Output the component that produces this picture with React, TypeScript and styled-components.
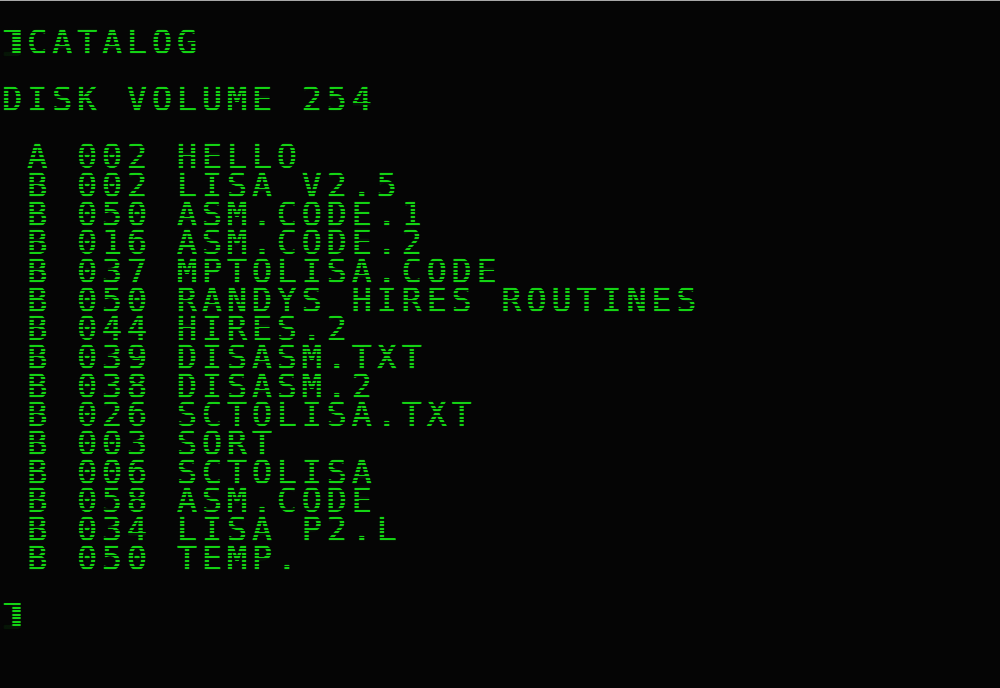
import React from "react";
import styled, { createGlobalStyle } from "styled-components";

const Global = createGlobalStyle`
  html, body { margin: 0; padding: 0; background: #050505; }
  body { width: 1000px; height: 688px; overflow: hidden; }
`;

const Screen = styled.div`
  position: relative;
  width: 1000px;
  height: 688px;
  box-sizing: border-box;
  border-top: 1px solid #a8a8a8;
  background: #050505;
  overflow: hidden;
`;

const Text = styled.pre`
  margin: 0;
  padding: 0 0 0 2px;
  margin-top: -1px;
  font-family: "DejaVu Sans Mono", "Liberation Mono", monospace;
  font-size: 33px;
  letter-spacing: 5.1px;
  line-height: 28.667px;
  color: #14d414;
  white-space: pre;
  text-shadow: 0.7px 0 0 #14d414, 0 0 1px rgba(20, 212, 20, 0.5);
`;

const Prompt = styled.span`
  display: inline-block;
  width: 25px;
  letter-spacing: 0;
  transform: scale(2.2, 0.88);
  transform-origin: 8.5px 40%;
  font-weight: 300;
`;

const Scanlines = styled.div`
  position: absolute;
  inset: 0;
  pointer-events: none;
  background: repeating-linear-gradient(
    to bottom,
    rgba(5, 5, 5, 0) 0px,
    rgba(5, 5, 5, 0) 2px,
    rgba(5, 5, 5, 0.92) 2px,
    rgba(5, 5, 5, 0.92) 3.583px
  );
`;

const lines = [
  "",
  "\u0000CATALOG",
  "",
  "DISK VOLUME 254",
  "",
  " A 002 HELLO",
  " B 002 LISA V2.5",
  " B 050 ASM.CODE.1",
  " B 016 ASM.CODE.2",
  " B 037 MPTOLISA.CODE",
  " B 050 RANDYS HIRES ROUTINES",
  " B 044 HIRES.2",
  " B 039 DISASM.TXT",
  " B 038 DISASM.2",
  " B 026 SCTOLISA.TXT",
  " B 003 SORT",
  " B 006 SCTOLISA",
  " B 058 ASM.CODE",
  " B 034 LISA P2.L",
  " B 050 TEMP.",
  "",
  "\u0000",
];

export default function App() {
  return (
    <>
      <Global />
      <Screen>
        <Text>
          {lines.map((line, i) => (
            <React.Fragment key={i}>
              {line.startsWith("\u0000") ? (
                <>
                  <Prompt>]</Prompt>
                  {line.slice(1)}
                </>
              ) : (
                line
              )}
              {i < lines.length - 1 ? "\n" : null}
            </React.Fragment>
          ))}
        </Text>
        <Scanlines />
      </Screen>
    </>
  );
}
